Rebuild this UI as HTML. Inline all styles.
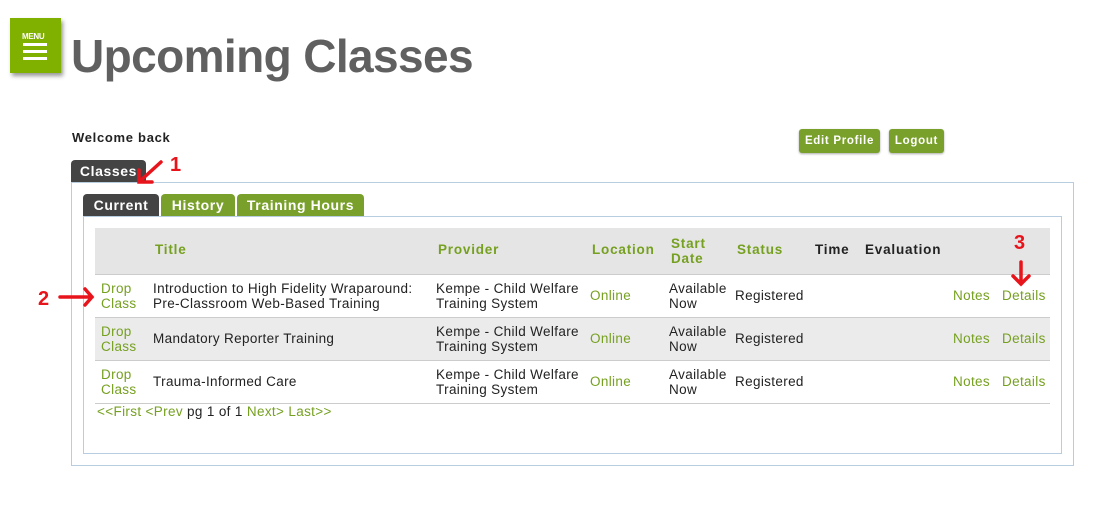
<!DOCTYPE html>
<html><head><meta charset="utf-8"><style>
*{margin:0;padding:0;box-sizing:border-box}
body{width:1098px;height:506px;background:#fff;position:relative;font-family:"Liberation Sans",sans-serif;font-size:13.5px;letter-spacing:0.35px;color:#222;overflow:hidden}
.a{position:absolute;white-space:nowrap}
.g{color:#76a020}
.hd{font-weight:bold;color:#76a020;letter-spacing:0.8px}
.tab{position:absolute;color:#fff;font-weight:bold;font-size:14px;letter-spacing:0.6px;text-align:center;border-radius:4px 4px 0 0;line-height:22px}
.btn{position:absolute;background:#78a02a;color:#fff;font-weight:bold;font-size:11.5px;letter-spacing:0.7px;text-align:center;border-radius:3px;line-height:24px;box-shadow:0 1px 2px #aaa}
.row{position:absolute;left:95px;width:955px;border-bottom:1px solid #ccc}
.l2{line-height:15px}
</style></head><body>
<div class="a" style="left:10px;top:18px;width:51px;height:55px;background:#80b000;box-shadow:2px 3px 4px #999"></div>
<div class="a" style="left:22px;top:32px;font-size:8px;color:#fff;font-weight:bold;letter-spacing:-0.3px">MENU</div>
<div class="a" style="left:23px;top:43px;width:24px;height:3px;background:#fff"></div>
<div class="a" style="left:23px;top:50px;width:24px;height:3px;background:#fff"></div>
<div class="a" style="left:23px;top:57px;width:24px;height:3px;background:#fff"></div>
<div class="a" style="left:71px;top:29px;font-size:46px;font-weight:bold;color:#606060;letter-spacing:-0.6px">Upcoming Classes</div>
<div class="a" style="left:72px;top:130px;font-weight:bold;font-size:13px;letter-spacing:0.7px">Welcome back</div>
<div class="btn" style="left:799px;top:129px;width:81px;height:24px">Edit Profile</div>
<div class="btn" style="left:889px;top:129px;width:55px;height:24px">Logout</div>
<div class="tab" style="left:71px;top:160px;width:75px;height:22px;background:#444">Classes</div>
<div class="a" style="left:71px;top:182px;width:1003px;height:284px;border:1px solid #b8cde0"></div>
<div class="tab" style="left:83px;top:194px;width:76px;height:22px;background:#444">Current</div>
<div class="tab" style="left:161px;top:194px;width:74px;height:22px;background:#78a02a">History</div>
<div class="tab" style="left:237px;top:194px;width:127px;height:22px;background:#78a02a">Training Hours</div>
<div class="a" style="left:83px;top:216px;width:979px;height:238px;border:1px solid #b8cde0"></div>
<div class="row" style="top:228px;height:47px;background:#e5e5e5"></div>
<div class="a hd" style="left:155px;top:242px">Title</div>
<div class="a hd" style="left:438px;top:242px">Provider</div>
<div class="a hd" style="left:592px;top:242px">Location</div>
<div class="a hd l2" style="left:671px;top:236px">Start<br>Date</div>
<div class="a hd" style="left:737px;top:242px">Status</div>
<div class="a hd" style="left:815px;top:242px;color:#222">Time</div>
<div class="a hd" style="left:865px;top:242px;color:#222">Evaluation</div>

<div class="row" style="top:275px;height:43px;background:#fff"></div>
<div class="row" style="top:318px;height:43px;background:#ebebeb"></div>
<div class="row" style="top:361px;height:43px;background:#fff"></div>

<div class="a g l2" style="left:101px;top:281px">Drop<br>Class</div>
<div class="a l2" style="left:153px;top:281px">Introduction to High Fidelity Wraparound:<br>Pre-Classroom Web-Based Training</div>
<div class="a l2" style="left:436px;top:281px">Kempe - Child Welfare<br>Training System</div>
<div class="a g" style="left:590px;top:288px">Online</div>
<div class="a l2" style="left:669px;top:281px">Available<br>Now</div>
<div class="a" style="left:735px;top:288px">Registered</div>
<div class="a g" style="left:953px;top:288px">Notes</div>
<div class="a g" style="left:1002px;top:288px">Details</div>

<div class="a g l2" style="left:101px;top:324px">Drop<br>Class</div>
<div class="a" style="left:153px;top:331px">Mandatory Reporter Training</div>
<div class="a l2" style="left:436px;top:324px">Kempe - Child Welfare<br>Training System</div>
<div class="a g" style="left:590px;top:331px">Online</div>
<div class="a l2" style="left:669px;top:324px">Available<br>Now</div>
<div class="a" style="left:735px;top:331px">Registered</div>
<div class="a g" style="left:953px;top:331px">Notes</div>
<div class="a g" style="left:1002px;top:331px">Details</div>

<div class="a g l2" style="left:101px;top:367px">Drop<br>Class</div>
<div class="a" style="left:153px;top:374px">Trauma-Informed Care</div>
<div class="a l2" style="left:436px;top:367px">Kempe - Child Welfare<br>Training System</div>
<div class="a g" style="left:590px;top:374px">Online</div>
<div class="a l2" style="left:669px;top:367px">Available<br>Now</div>
<div class="a" style="left:735px;top:374px">Registered</div>
<div class="a g" style="left:953px;top:374px">Notes</div>
<div class="a g" style="left:1002px;top:374px">Details</div>

<div class="a" style="left:97px;top:404px"><span class="g">&lt;&lt;First &lt;Prev</span> pg 1 of 1 <span class="g">Next&gt; Last&gt;&gt;</span></div>

<svg class="a" style="left:0;top:0" width="1098" height="506">
<g stroke="#e8141c" stroke-width="3.5" fill="none" stroke-linecap="round">
<path d="M161 162 L139 182 M139 170 L139 182 L152 182"/>
<path d="M60 297 L92 297 M85 289 L92 297 L85 305"/>
<path d="M1021 262 L1021 284 M1013 276 L1021 284 L1029 276"/>
</g>
<g fill="#e8141c" font-family="Liberation Sans" font-weight="bold" font-size="20">
<text x="170" y="171">1</text><text x="38" y="305">2</text><text x="1014" y="249">3</text>
</g>
</svg>
</body></html>
